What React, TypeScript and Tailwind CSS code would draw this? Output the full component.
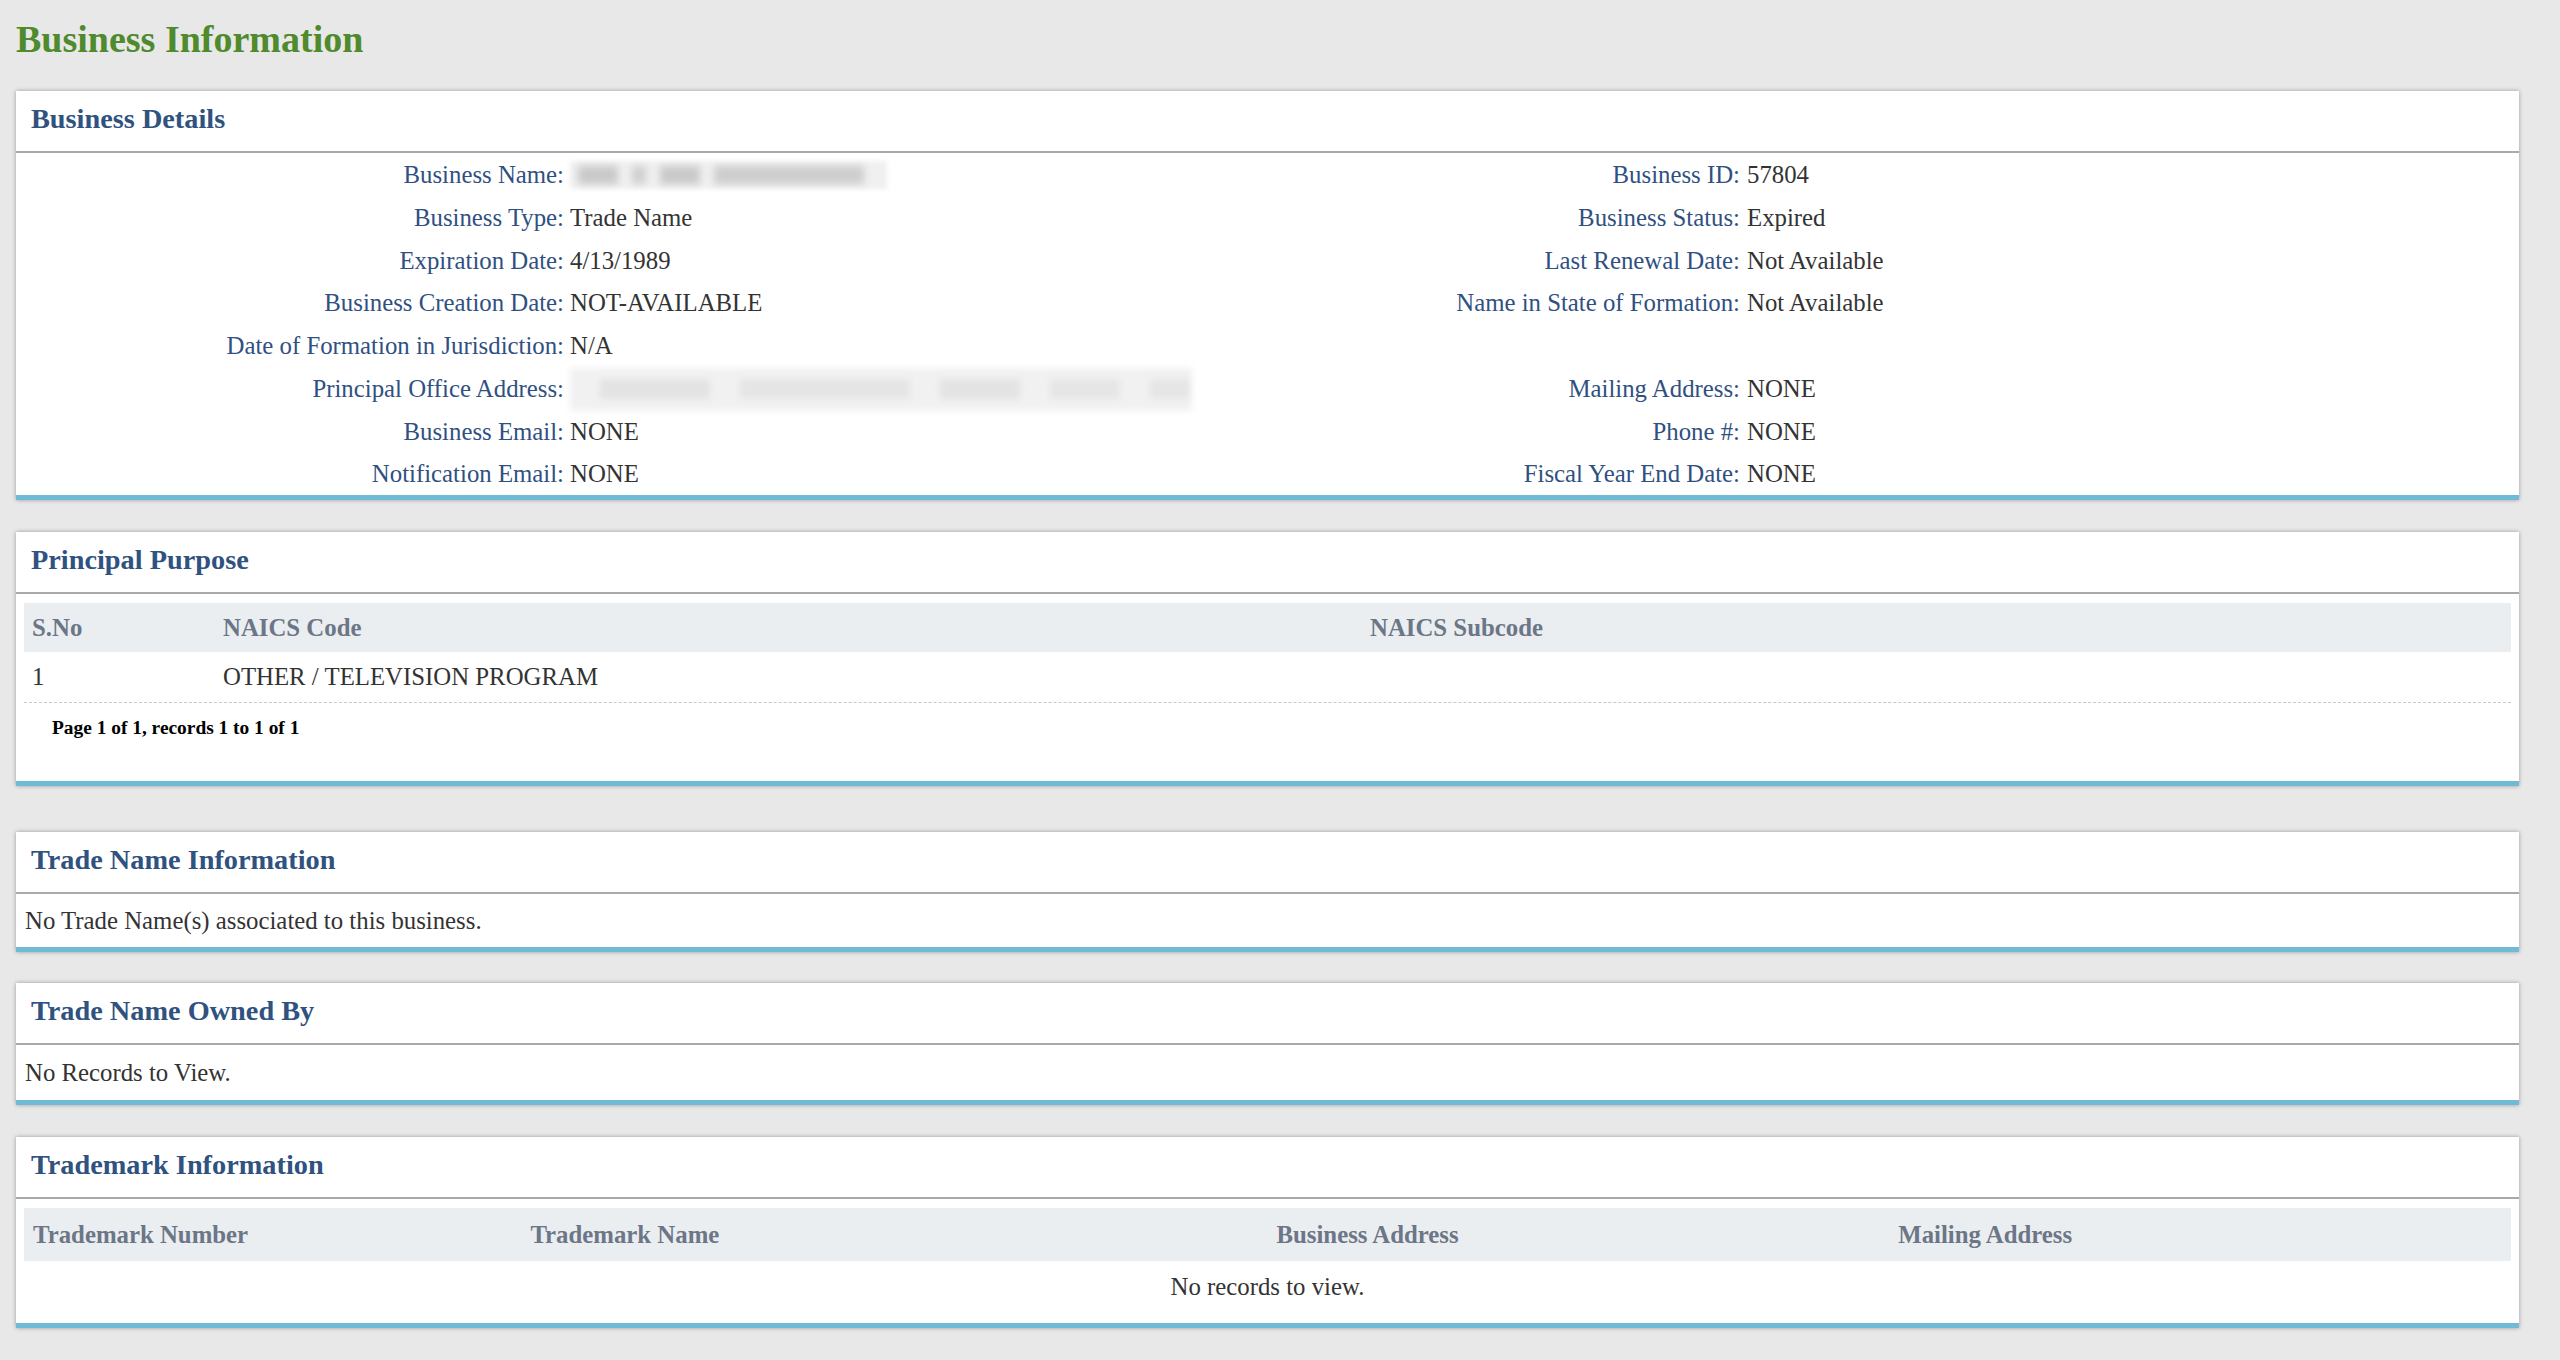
import React from 'react';

const serif = "font-['Liberation_Serif','Times_New_Roman',serif]";

interface PanelProps {
  title: string;
  className?: string;
  children?: React.ReactNode;
}

function Panel({ title, className = '', children }: PanelProps) {
  return (
    <section
      className={`bg-white shadow-[0_0_4px_rgba(0,0,0,0.35)] border-b-[5px] border-b-[#6fbbd5] ${className}`}
    >
      <div className="h-[62px] border-b-2 border-b-[#a9a9a9] px-[15px] pt-[14px]">
        <h2 className="text-[28.3px] leading-[28px] font-bold text-[#30527f]">{title}</h2>
      </div>
      {children}
    </section>
  );
}

type Detail = { label: string; value?: React.ReactNode };

const rows: [Detail, Detail | null][] = [
  [{ label: 'Business Name:', value: 'blur-name' }, { label: 'Business ID:', value: '57804' }],
  [{ label: 'Business Type:', value: 'Trade Name' }, { label: 'Business Status:', value: 'Expired' }],
  [{ label: 'Expiration Date:', value: '4/13/1989' }, { label: 'Last Renewal Date:', value: 'Not Available' }],
  [
    { label: 'Business Creation Date:', value: 'NOT-AVAILABLE' },
    { label: 'Name in State of Formation:', value: 'Not Available' },
  ],
  [{ label: 'Date of Formation in Jurisdiction:', value: 'N/A' }, null],
  [{ label: 'Principal Office Address:', value: 'blur-address' }, { label: 'Mailing Address:', value: 'NONE' }],
  [{ label: 'Business Email:', value: 'NONE' }, { label: 'Phone #:', value: 'NONE' }],
  [{ label: 'Notification Email:', value: 'NONE' }, { label: 'Fiscal Year End Date:', value: 'NONE' }],
];

// redacted values, drawn as soft grey smudges
function BlurredName() {
  return (
    <span className="flex shrink-0 items-center h-[28px] w-[317px] bg-[#f0f0f0] blur-[2px]">
      <span className="ml-[8px] w-[40px] h-[18px] bg-[#c9c9c9] blur-[3px]" />
      <span className="ml-[14px] w-[14px] h-[18px] bg-[#cfcfcf] blur-[3px]" />
      <span className="ml-[14px] w-[40px] h-[18px] bg-[#c9c9c9] blur-[3px]" />
      <span className="ml-[14px] w-[150px] h-[18px] bg-[#cdcdcd] blur-[3px]" />
    </span>
  );
}

function BlurredAddress() {
  return (
    <span className="flex shrink-0 items-center h-[43px] w-[622px] bg-[#f1f1f1] blur-[3px]">
      <span className="ml-[30px] w-[110px] h-[20px] bg-[#e3e3e3]" />
      <span className="ml-[30px] w-[170px] h-[20px] bg-[#e5e5e5]" />
      <span className="ml-[30px] w-[80px] h-[20px] bg-[#e3e3e3]" />
      <span className="ml-[30px] w-[70px] h-[20px] bg-[#e6e6e6]" />
      <span className="ml-[30px] w-[40px] h-[20px] bg-[#e6e6e6]" />
    </span>
  );
}

function Value({ v }: { v?: React.ReactNode }) {
  if (v === 'blur-name') return <BlurredName />;
  if (v === 'blur-address') return <BlurredAddress />;
  return <>{v}</>;
}

export default function App() {
  return (
    <div className={`min-h-[1360px] bg-[#e8e8e8] pl-4 pr-[41px] pt-[20px] ${serif} text-[24.8px] text-[#333]`}>
      <h1 className="text-[38px] leading-[38px] font-bold text-[#4f8a2d] mb-[33px]">Business Information</h1>

      <Panel title="Business Details" className="mb-[32px]">
        <div className="grid grid-cols-[548px_588px_588px_1fr] pt-[1px] -mb-[1px]">
          {rows.map(([left, right], i) => (
            <React.Fragment key={i}>
              <div className="h-[42.75px] leading-[42.75px] text-right text-[#2f5081]">{left.label}</div>
              <div className="h-[42.75px] leading-[42.75px] pl-[6px] flex items-center overflow-visible">
                <Value v={left.value} />
              </div>
              <div className="h-[42.75px] leading-[42.75px] text-right text-[#2f5081]">{right?.label}</div>
              <div className="h-[42.75px] leading-[42.75px] pl-[7px]">{right?.value}</div>
            </React.Fragment>
          ))}
        </div>
      </Panel>

      <Panel title="Principal Purpose" className="mb-[46px]">
        <div className="px-[8px] pt-[9px]">
          <div className="grid grid-cols-[191px_1147px_1fr] h-[49px] items-center bg-[#eaeef1] font-bold text-[#6c7687]">
            <div className="pl-[8px]">S.No</div>
            <div className="pl-[8px]">NAICS Code</div>
            <div className="pl-[8px]">NAICS Subcode</div>
          </div>
          <div className="grid grid-cols-[191px_1147px_1fr] h-[51px] items-center border-b border-dashed border-b-[#c8c8c8]">
            <div className="pl-[8px]">1</div>
            <div className="pl-[8px]">OTHER / TELEVISION PROGRAM</div>
            <div className="pl-[8px]"></div>
          </div>
          <div className="h-[78px] pl-[28px] pt-[15px] text-[19.4px] leading-[20px] font-bold text-black">
            Page 1 of 1, records 1 to 1 of 1
          </div>
        </div>
      </Panel>

      <Panel title="Trade Name Information" className="mb-[31px]">
        <p className="px-[9px] pt-[9px] pb-[9px] leading-[35px]">No Trade Name(s) associated to this business.</p>
      </Panel>

      <Panel title="Trade Name Owned By" className="mb-[32px]">
        <p className="px-[9px] pt-[10px] pb-[10px] leading-[35px]">No Records to View.</p>
      </Panel>

      <Panel title="Trademark Information">
        <div className="px-[8px] pt-[9px] pb-[10px]">
          <div className="grid grid-cols-[20%_30%_25%_25%] h-[53px] items-center bg-[#eaeef1] font-bold text-[#6c7687]">
            <div className="pl-[9px]">Trademark Number</div>
            <div className="pl-[9px]">Trademark Name</div>
            <div className="pl-[9px]">Business Address</div>
            <div className="pl-[9px]">Mailing Address</div>
          </div>
          <div className="h-[52px] flex items-center justify-center">No records to view.</div>
        </div>
      </Panel>
    </div>
  );
}
